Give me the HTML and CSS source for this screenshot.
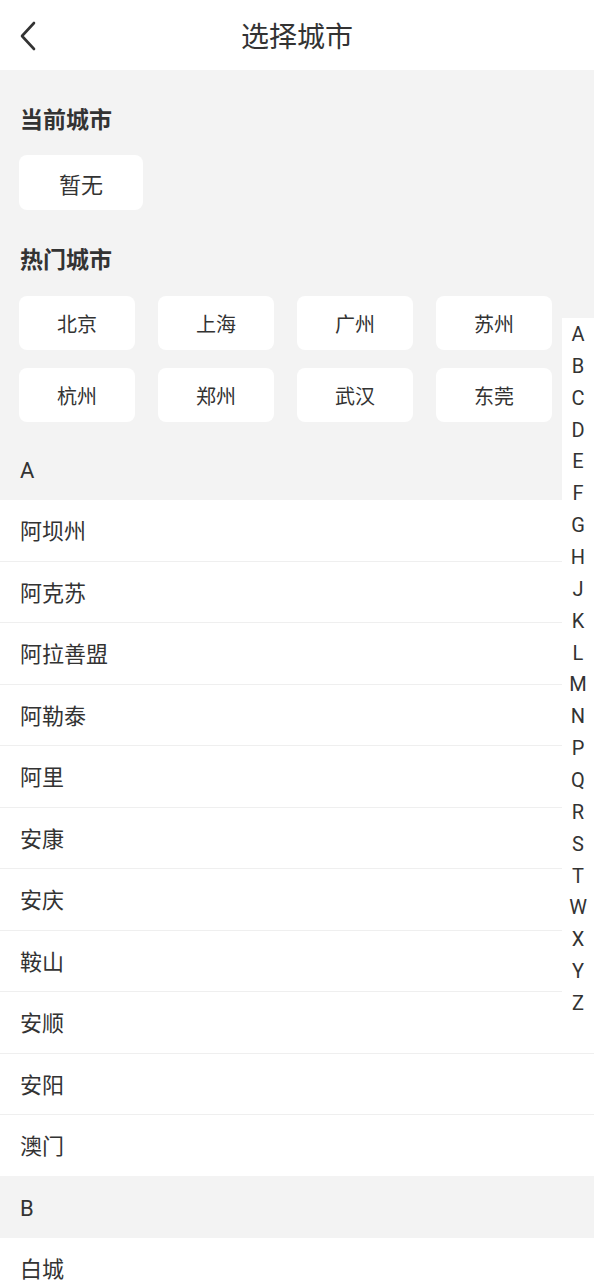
FILE: index.html
```html
<!DOCTYPE html>
<html lang="zh-CN">
<head>
    <meta charset="UTF-8">
    <meta name="viewport" content="width=device-width, initial-scale=1.0">
    <title>选择城市</title>
    <link rel="stylesheet" href="styles.css">
</head>
<body>

    <!-- Top bar -->
    <div class="topbar">
        <span class="back">
            <svg width="20" height="30" viewBox="0 0 20 30">
                <path d="M16 2 L4 15 L16 28" fill="none" stroke="#333" stroke-width="2.6" stroke-linecap="round" stroke-linejoin="round"/>
            </svg>
        </span>
        <h1>选择城市</h1>
    </div>

    <div class="page">
        <!-- Current city -->
        <div class="section-title">当前城市</div>
        <div class="current">
            <span class="chip chip-big">暂无</span>
        </div>

        <!-- Hot cities -->
        <div class="section-title hot-title">热门城市</div>
        <div class="hot-grid">
            <span class="chip">北京</span>
            <span class="chip">上海</span>
            <span class="chip">广州</span>
            <span class="chip">苏州</span>
            <span class="chip">杭州</span>
            <span class="chip">郑州</span>
            <span class="chip">武汉</span>
            <span class="chip">东莞</span>
        </div>

        <!-- City list -->
        <div class="letter">A</div>
        <ul class="city-list">
            <li>阿坝州</li>
            <li>阿克苏</li>
            <li>阿拉善盟</li>
            <li>阿勒泰</li>
            <li>阿里</li>
            <li>安康</li>
            <li>安庆</li>
            <li>鞍山</li>
            <li>安顺</li>
            <li>安阳</li>
            <li>澳门</li>
        </ul>
        <div class="letter">B</div>
        <ul class="city-list">
            <li>白城</li>
        </ul>

        <!-- Letter index -->
        <div class="index-bar">
            <span>A</span><span>B</span><span>C</span><span>D</span><span>E</span>
            <span>F</span><span>G</span><span>H</span><span>J</span><span>K</span>
            <span>L</span><span>M</span><span>N</span><span>P</span><span>Q</span>
            <span>R</span><span>S</span><span>T</span><span>W</span><span>X</span>
            <span>Y</span><span>Z</span>
        </div>
    </div>

</body>
</html>
```

FILE: styles.css
```css
/* General styles */
body {
    margin: 0;
    font-family: "Noto Sans CJK SC", "Noto Sans", sans-serif;
    color: #333;
    background: #f3f3f3;
}

.topbar {
    height: 70px;
    background: #fff;
    display: flex;
    align-items: center;
    justify-content: center;
    position: relative;
}

.topbar h1 {
    margin: 0;
    font-size: 28px;
    font-weight: normal;
    color: #333;
}

.back {
    position: absolute;
    left: 18px;
    top: 21px;
    display: flex;
}

.page {
    position: relative;
    padding-top: 32px;
}

.section-title {
    font-size: 23px;
    font-weight: bold;
    line-height: 32px;
    padding-left: 20px;
}

.hot-title {
    margin-top: 32px;
}

.current {
    padding: 21px 0 0 19px;
}

/* City chips */
.chip {
    background: #fff;
    border-radius: 8px;
    height: 54px;
    display: flex;
    align-items: center;
    justify-content: center;
    font-size: 20px;
    color: #333;
}

.chip-big {
    width: 124px;
    height: 55px;
    font-size: 22px;
}

.hot-grid {
    display: grid;
    grid-template-columns: repeat(4, 1fr);
    gap: 18px 23px;
    padding: 22px 42px 0 19px;
}

/* Letter header */
.letter {
    margin-top: 16px;
    height: 62px;
    line-height: 66px;
    padding-left: 20px;
    font-family: Roboto, "Noto Sans", sans-serif;
    font-size: 22px;
}

.city-list {
    list-style: none;
    margin: 0;
    padding: 0;
    background: #fff;
}

.city-list + .letter {
    margin-top: 0;
}

.city-list li {
    height: 60.5px;
    line-height: 58px;
    padding-left: 20px;
    font-size: 22px;
    border-bottom: 1px solid #efefef;
}

.city-list li:last-child {
    border-bottom: none;
}

/* Letter index on the right */
.index-bar {
    position: absolute;
    right: 0;
    top: 248px;
    width: 32px;
    background: #fff;
    display: flex;
    flex-direction: column;
    align-items: center;
}

.index-bar span {
    height: 31.86px;
    line-height: 33px;
    font-family: Roboto, "Noto Sans", sans-serif;
    font-size: 20px;
    color: #333;
}
```
